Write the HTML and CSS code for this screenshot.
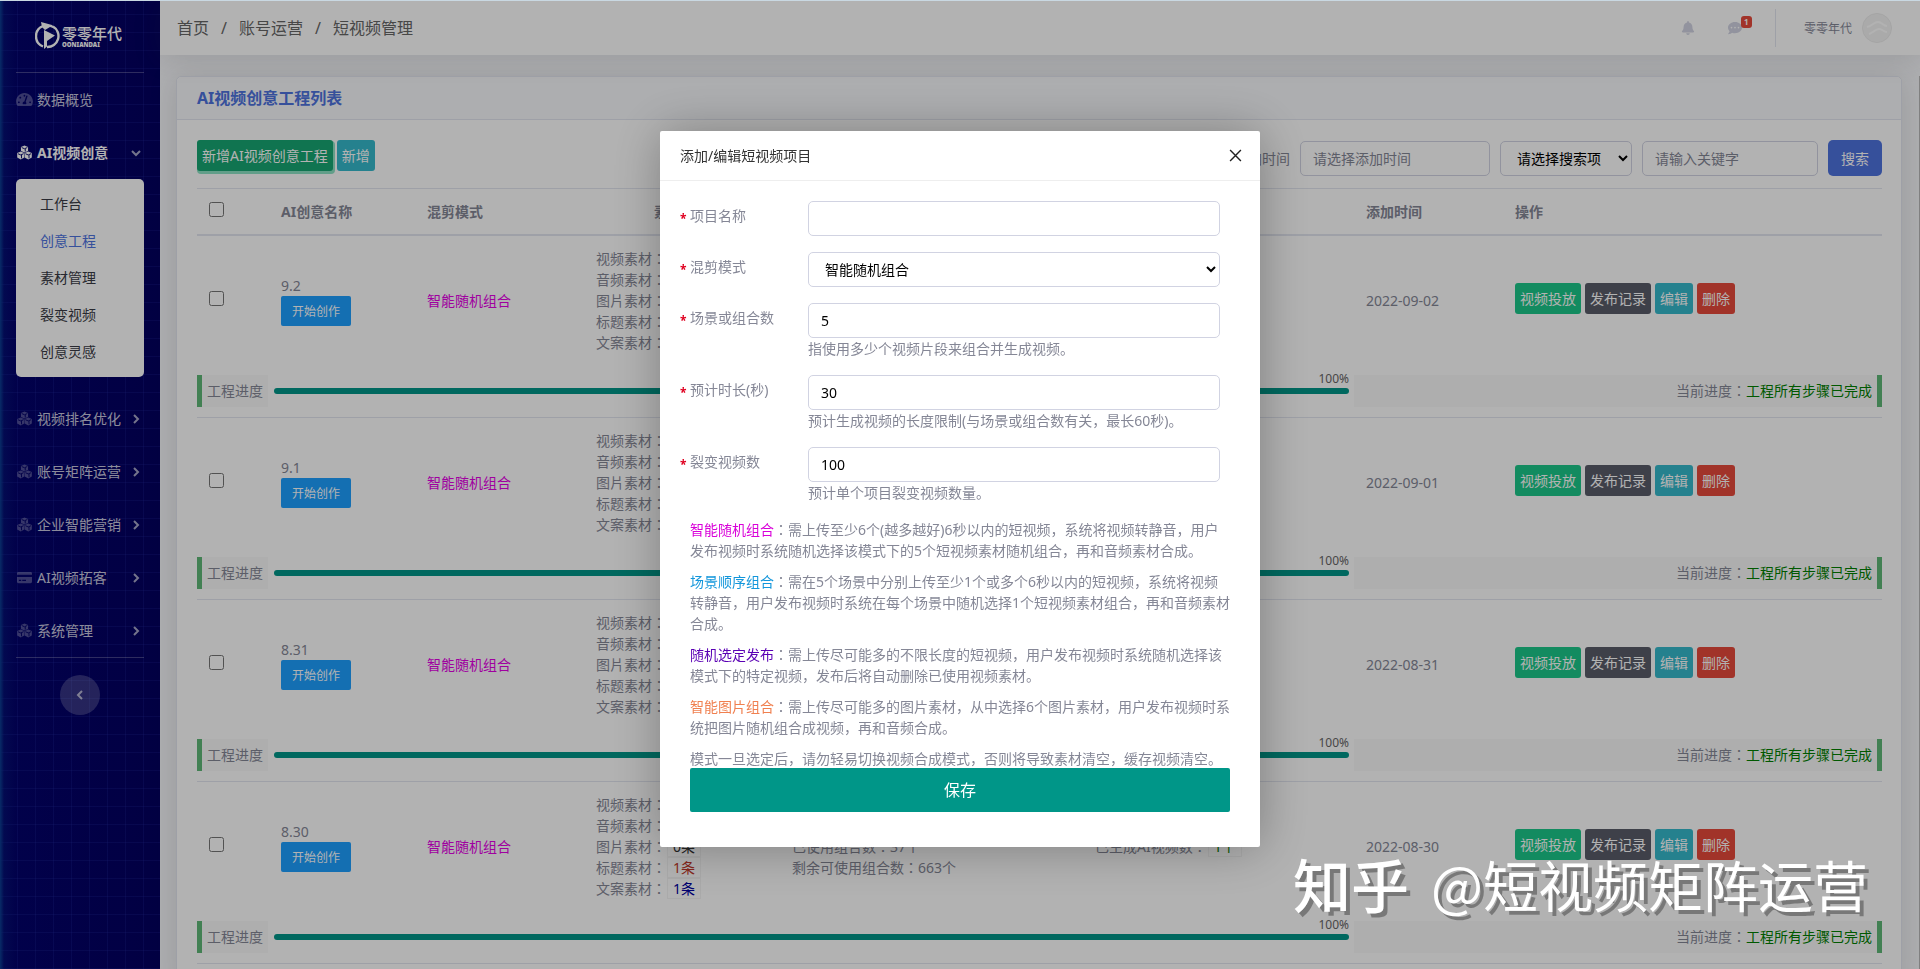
FILE: index.html
```html
<!DOCTYPE html>
<html lang="zh-CN">
<head>
<meta charset="utf-8">
<title>短视频管理</title>
<link rel="stylesheet" href="styles.css">
</head>
<body>
<svg class="sprite" aria-hidden="true">
  <symbol id="cubes" viewBox="0 0 16 16">
    <path d="M8 .6l3.800 1.500v4.200L8 8 4.200 6.300V2.100z"/>
    <path d="M4 7l3.800 1.600v4.800L4 15.400.2 13.400V8.600z"/>
    <path d="M12 7l3.800 1.600v4.800L12 15.400l-3.800-2V8.600z"/>
    <path class="seam" d="M5 2.700L8 4l3-1.300M8.800 4v3M1 9.300l3 1.300 3-1.300M4.800 10.600v3.600M9 9.300l3 1.300 3-1.300M12.800 10.600v3.600"/>
  </symbol>
  <symbol id="right" viewBox="0 0 10 10"><path d="M3 1l4 4-4 4" fill="none" stroke="currentColor" stroke-width="2"/></symbol>
  <symbol id="down" viewBox="0 0 10 10"><path d="M1 3l4 4 4-4" fill="none" stroke="currentColor" stroke-width="2"/></symbol>
  <symbol id="left" viewBox="0 0 10 10"><path d="M7 1L3 5l4 4" fill="none" stroke="currentColor" stroke-width="2"/></symbol>
</svg>

<div class="app">
  <aside class="sidebar">
    <a class="brand" href="#">
      <svg class="brand-mark" viewBox="0 0 26 28" aria-hidden="true">
        <path d="M8 5A11 11 0 0 0 8 25.500M18 5.500A11 11 0 0 1 12 26" fill="none" stroke="#fff" stroke-width="2.400"/>
        <path d="M9 9v19l3-2.500V20l8-5.500z" fill="#fff"/>
        <path d="M6 1l11 3 4 4-6-2-5 3-3-3z" fill="#fff"/>
      </svg>
      <span class="brand-text"><span class="brand-name">零零年代</span><span class="brand-sub">OONIANDAI</span></span>
    </a>
    <hr class="line">
    <nav>
      <a class="nav-item" href="#"><svg class="nav-icon" viewBox="0 0 576 512"><path d="M288 32C128.940 32 0 160.940 0 320c0 52.800 14.250 102.260 39.060 144.800 5.610 9.620 16.300 15.200 27.440 15.200h443c11.140 0 21.830-5.580 27.440-15.200C561.750 422.260 576 372.800 576 320c0-159.060-128.940-288-288-288zm0 64c14.710 0 26.580 10.130 30.320 23.650-1.110 2.260-2.640 4.230-3.450 6.670l-9.220 27.670c-5.130 3.490-10.970 6.010-17.640 6.010-17.670 0-32-14.330-32-32S270.330 96 288 96zM96 384c-17.670 0-32-14.330-32-32s14.330-32 32-32 32 14.330 32 32-14.330 32-32 32zm48-160c-17.670 0-32-14.330-32-32s14.330-32 32-32 32 14.330 32 32-14.330 32-32 32zm246.770-72.410l-61.330 184C343.130 347.330 352 364.540 352 384c0 11.720-3.380 22.550-8.880 32H232.880c-5.500-9.450-8.880-20.280-8.880-32 0-33.940 26.500-61.430 59.900-63.590l61.340-184.010c4.170-12.560 17.730-19.450 30.360-15.170 12.570 4.190 19.350 17.790 15.170 30.360zM480 384c-17.670 0-32-14.330-32-32s14.330-32 32-32 32 14.330 32 32-14.330 32-32 32z"/></svg><span>数据概览</span></a>
      <a class="nav-item active" href="#"><svg class="nav-icon"><use href="#cubes"/></svg><span>AI视频创意</span><svg class="arrow"><use href="#down"/></svg></a>
      <div class="submenu">
        <a href="#">工作台</a>
        <a class="current" href="#">创意工程</a>
        <a href="#">素材管理</a>
        <a href="#">裂变视频</a>
        <a href="#">创意灵感</a>
      </div>
      <a class="nav-item" href="#"><svg class="nav-icon"><use href="#cubes"/></svg><span>视频排名优化</span><svg class="arrow"><use href="#right"/></svg></a>
      <a class="nav-item" href="#"><svg class="nav-icon"><use href="#cubes"/></svg><span>账号矩阵运营</span><svg class="arrow"><use href="#right"/></svg></a>
      <a class="nav-item" href="#"><svg class="nav-icon"><use href="#cubes"/></svg><span>企业智能营销</span><svg class="arrow"><use href="#right"/></svg></a>
      <a class="nav-item" href="#"><svg class="nav-icon" viewBox="0 0 16 16"><path d="M1.500 2h13A1.500 1.500 0 0 1 16 3.500V5H0V3.500A1.500 1.500 0 0 1 1.500 2zM0 7.500h16v5a1.500 1.500 0 0 1-1.500 1.500h-13A1.500 1.500 0 0 1 0 12.500zM2 10.500v1.300h2.500v-1.300zm3.600 0v1.300h4v-1.300z"/></svg><span>AI视频拓客</span><svg class="arrow"><use href="#right"/></svg></a>
      <a class="nav-item" href="#"><svg class="nav-icon"><use href="#cubes"/></svg><span>系统管理</span><svg class="arrow"><use href="#right"/></svg></a>
    </nav>
    <hr class="line">
    <button class="collapse" type="button" aria-label="收起"><svg class="arrow"><use href="#left"/></svg></button>
  </aside>

  <div class="page">
    <header class="topbar">
      <ol class="crumbs"><li><a href="#">首页</a></li><li><a href="#">账号运营</a></li><li>短视频管理</li></ol>
      <div class="tools">
        <a class="tool" href="#" aria-label="通知"><svg class="tool-icon" viewBox="0 0 448 512"><path d="M224 512c35.320 0 63.970-28.650 63.970-64H160.030c0 35.350 28.650 64 63.970 64zm215.390-149.710c-19.320-20.760-55.470-51.990-55.470-154.290 0-77.700-54.480-139.900-127.940-155.160V32c0-17.670-14.320-32-31.980-32s-31.980 14.330-31.980 32v20.840C118.560 68.100 64.080 130.300 64.080 208c0 102.300-36.150 133.530-55.470 154.290-6 6.450-8.660 14.160-8.610 21.710.11 16.400 12.980 32 32.100 32h383.800c19.120 0 32-15.600 32.100-32 .05-7.550-2.610-15.270-8.610-21.710z"/></svg></a>
        <a class="tool" href="#" aria-label="消息"><svg class="tool-icon" viewBox="0 0 512 512"><path fill-rule="evenodd" d="M256 32C114.600 32 0 125.100 0 240c0 49.600 21.400 95 57 130.700C44.500 421.100 2.700 466 2.200 466.500c-2.200 2.300-2.800 5.700-1.500 8.700S4.800 480 8 480c66.300 0 116-31.800 140.600-51.400 32.700 12.300 69 19.400 107.400 19.400 141.400 0 256-93.100 256-208S397.400 32 256 32zM128 208a32 32 0 1 0 0 64 32 32 0 0 0 0-64zm128 0a32 32 0 1 0 0 64 32 32 0 0 0 0-64zm128 0a32 32 0 1 0 0 64 32 32 0 0 0 0-64z"/></svg><span class="badge">1</span></a>
        <a class="user" href="#"><span>零零年代</span>
          <svg class="avatar" viewBox="0 0 30 30" aria-hidden="true"><circle cx="15" cy="15" r="14.500" fill="#f4f4f4" stroke="#ececec"/><path d="M5 14c5-1 7-5 11-5 4 0 5 4 9 4M7 21c4-1 6-5 10-5 4 0 4 3 8 3" fill="none" stroke="#fff" stroke-width="2"/></svg></a>
      </div>
    </header>

    <main class="content">
      <section class="card">
        <h1 class="card-title">AI视频创意工程列表</h1>
        <div class="card-body">
          <div class="toolbar">
            <button class="btn create" type="button">新增AI视频创意工程</button>
            <button class="btn info" type="button">新增</button>
            <form class="filter">
              <label for="added">添加时间</label>
              <input class="field date" id="added" placeholder="请选择添加时间">
              <select class="field kind" aria-label="搜索项"><option>请选择搜索项</option></select>
              <input class="field word" aria-label="关键字" placeholder="请输入关键字">
              <button class="search" type="button">搜索</button>
            </form>
          </div>

          <table class="list">
            <colgroup><col class="c-check"><col class="c-name"><col class="c-mode"><col class="c-media"><col class="c-combo"><col class="c-made"><col class="c-date"><col></colgroup>
            <thead>
              <tr><th><input type="checkbox" aria-label="全选"></th><th>AI创意名称</th><th>混剪模式</th><th class="center">素材数量</th><th></th><th></th><th>添加时间</th><th>操作</th></tr>
            </thead>
            <tbody>
              <tr>
                <td><input type="checkbox" aria-label="9.2"></td>
                <td><div>9.2</div><button class="start" type="button">开始创作</button></td>
                <td class="mode">智能随机组合</td>
                <td>视频素材：<br>音频素材：<br>图片素材：<br>标题素材：<br>文案素材：</td>
                <td></td><td></td>
                <td>2022-09-02</td>
                <td><div class="actions"><button class="btn ok" type="button">视频投放</button><button class="btn dark" type="button">发布记录</button><button class="btn info" type="button">编辑</button><button class="btn danger" type="button">删除</button></div></td>
              </tr>
              <tr class="steps"><td colspan="8"><div class="step">
                <span class="step-name">工程进度</span>
                <div class="bar"><span class="percent">100%</span></div>
                <span class="state">当前进度：<b>工程所有步骤已完成</b></span>
              </div></td></tr>
            </tbody>
            <tbody>
              <tr>
                <td><input type="checkbox" aria-label="9.1"></td>
                <td><div>9.1</div><button class="start" type="button">开始创作</button></td>
                <td class="mode">智能随机组合</td>
                <td>视频素材：<br>音频素材：<br>图片素材：<br>标题素材：<br>文案素材：</td>
                <td></td><td></td>
                <td>2022-09-01</td>
                <td><div class="actions"><button class="btn ok" type="button">视频投放</button><button class="btn dark" type="button">发布记录</button><button class="btn info" type="button">编辑</button><button class="btn danger" type="button">删除</button></div></td>
              </tr>
              <tr class="steps"><td colspan="8"><div class="step">
                <span class="step-name">工程进度</span>
                <div class="bar"><span class="percent">100%</span></div>
                <span class="state">当前进度：<b>工程所有步骤已完成</b></span>
              </div></td></tr>
            </tbody>
            <tbody>
              <tr>
                <td><input type="checkbox" aria-label="8.31"></td>
                <td><div>8.31</div><button class="start" type="button">开始创作</button></td>
                <td class="mode">智能随机组合</td>
                <td>视频素材：<br>音频素材：<br>图片素材：<br>标题素材：<br>文案素材：</td>
                <td></td><td></td>
                <td>2022-08-31</td>
                <td><div class="actions"><button class="btn ok" type="button">视频投放</button><button class="btn dark" type="button">发布记录</button><button class="btn info" type="button">编辑</button><button class="btn danger" type="button">删除</button></div></td>
              </tr>
              <tr class="steps"><td colspan="8"><div class="step">
                <span class="step-name">工程进度</span>
                <div class="bar"><span class="percent">100%</span></div>
                <span class="state">当前进度：<b>工程所有步骤已完成</b></span>
              </div></td></tr>
            </tbody>
            <tbody>
              <tr>
                <td><input type="checkbox" aria-label="8.30"></td>
                <td><div>8.30</div><button class="start" type="button">开始创作</button></td>
                <td class="mode">智能随机组合</td>
                <td>视频素材：<br>音频素材：<br>图片素材：<span class="count">0条</span><br>标题素材：<span class="count red">1条</span><br>文案素材：<span class="count navy">1条</span></td>
                <td><br>已使用组合数：37个<br>剩余可使用组合数：663个</td>
                <td>已生成AI视频数：<span class="count green">1个</span></td>
                <td>2022-08-30</td>
                <td><div class="actions"><button class="btn ok" type="button">视频投放</button><button class="btn dark" type="button">发布记录</button><button class="btn info" type="button">编辑</button><button class="btn danger" type="button">删除</button></div></td>
              </tr>
              <tr class="steps"><td colspan="8"><div class="step">
                <span class="step-name">工程进度</span>
                <div class="bar"><span class="percent">100%</span></div>
                <span class="state">当前进度：<b>工程所有步骤已完成</b></span>
              </div></td></tr>
            </tbody>
          </table>
        </div>
      </section>
    </main>
  </div>
</div>

<div class="overlay">
  <div class="modal" role="dialog" aria-labelledby="dialog-title">
    <div class="modal-head">
      <h2 id="dialog-title">添加/编辑短视频项目</h2>
      <button class="close" type="button" aria-label="关闭"><svg viewBox="0 0 12 12"><path d="M1 1l10 10M11 1L1 11" stroke="#222" stroke-width="1.300"/></svg></button>
    </div>
    <form class="modal-form">
      <div class="row"><label for="f-name">项目名称</label><div><input class="field" id="f-name"></div></div>
      <div class="row"><label for="f-mode">混剪模式</label><div><select class="field" id="f-mode"><option>智能随机组合</option></select></div></div>
      <div class="row"><label for="f-scene">场景或组合数</label><div><input class="field" id="f-scene" value="5"><p>指使用多少个视频片段来组合并生成视频。</p></div></div>
      <div class="row"><label for="f-time">预计时长(秒)</label><div><input class="field" id="f-time" value="30"><p>预计生成视频的长度限制(与场景或组合数有关，最长60秒)。</p></div></div>
      <div class="row"><label for="f-count">裂变视频数</label><div><input class="field" id="f-count" value="100"><p>预计单个项目裂变视频数量。</p></div></div>
      <div class="notes">
        <p><span class="magenta">智能随机组合</span><span class="colon">：</span>需上传至少6个(越多越好)6秒以内的短视频，系统将视频转静音，用户发布视频时系统随机选择该模式下的5个短视频素材随机组合，再和音频素材合成。</p>
        <p><span class="blue">场景顺序组合</span><span class="colon">：</span>需在5个场景中分别上传至少1个或多个6秒以内的短视频，系统将视频转静音，用户发布视频时系统在每个场景中随机选择1个短视频素材组合，再和音频素材合成。</p>
        <p><span class="indigo">随机选定发布</span><span class="colon">：</span>需上传尽可能多的不限长度的短视频，用户发布视频时系统随机选择该模式下的特定视频，发布后将自动删除已使用视频素材。</p>
        <p><span class="coral">智能图片组合</span><span class="colon">：</span>需上传尽可能多的图片素材，从中选择6个图片素材，用户发布视频时系统把图片随机组合成视频，再和音频合成。</p>
        <p>模式一旦选定后，请勿轻易切换视频合成模式，否则将导致素材清空，缓存视频清空。</p>
      </div>
      <button class="save" type="button">保存</button>
    </form>
  </div>
</div>
<div class="watermark"><b>知乎</b><span>@短视频矩阵运营</span></div>
</body>
</html>
```

FILE: styles.css
```css
* { box-sizing: border-box; }
body {
  margin: 0;
  overflow: hidden;
  font: 14px/21px "Noto Sans", "Noto Sans CJK SC", sans-serif;
  color: #858796;
}
a { color: inherit; text-decoration: none; }
button, input, select { font: inherit; margin: 0; }
button { border: 0; cursor: pointer; white-space: nowrap; }
p, h1, h2, ol { margin: 0; padding: 0; }
.sprite { position: absolute; width: 0; height: 0; }

/* colons centred in their cell */
.list td, .colon {
  font-family: "Noto Sans", "Noto Sans CJK TC", sans-serif;
  font-feature-settings: "locl" 0;
}

.app {
  display: flex;
  height: 100vh;
  overflow: hidden;
  border-top: 1px solid #c9d8e2;
  background: #f8f9fc;
}

/* sidebar */
.sidebar {
  flex: 0 0 160px;
  padding: 0 16px;
  background:
    linear-gradient(90deg, #0c3f94, rgba(10, 50, 140, .25) 4px, transparent 16px),
    linear-gradient(90deg, transparent 17px, rgba(70, 90, 220, .13) 17px) 0 0 / 18px 18px,
    linear-gradient(transparent 17px, rgba(70, 90, 220, .13) 17px) 0 -4px / 18px 18px,
    linear-gradient(90deg, #02026c, #030060);
}
.brand { display: flex; gap: 1px; height: 71px; padding: 20px 0 0 19px; color: #fff; }
.brand-mark { width: 26px; height: 28px; }
.brand-text { display: flex; flex-direction: column; padding-top: 3px; }
.brand-name { font-size: 15px; line-height: 18px; font-weight: 500; }
.brand-sub { font-size: 6px; line-height: 6px; font-weight: 900; }
.line { margin: 0; border: 0; border-top: 1px solid rgba(255, 255, 255, .25); }
.nav-item { display: flex; align-items: center; height: 53px; color: rgba(255, 255, 255, .8); }
.nav-item span { flex: 1; padding-left: 4px; white-space: nowrap; }
.nav-icon { width: 17px; height: 15px; fill: rgba(255, 255, 255, .3); }
.seam { fill: none; stroke: #020268; stroke-width: 1; }
.arrow { width: 10px; height: 10px; margin-right: 3px; color: rgba(255, 255, 255, .65); }
.nav-item.active { color: #fff; font-weight: 700; }
.active .nav-icon { fill: #fff; }
.submenu { margin-bottom: 15px; padding: 7px 0 6px; border-radius: 5px; background: #fff; }
.submenu a { display: block; padding: 7px 24px 9px; color: #3a3b45; }
.submenu .current { color: #4e73df; }
.collapse {
  display: flex;
  align-items: center;
  justify-content: center;
  width: 40px;
  height: 40px;
  margin: 17px auto;
  padding: 0;
  border-radius: 50%;
  background: rgba(255, 255, 255, .2);
}
.collapse .arrow { margin: 0; }

/* top bar */
.page { flex: 1; min-width: 0; }
.topbar {
  position: relative;
  display: flex;
  align-items: center;
  justify-content: space-between;
  height: 54px;
  padding: 0 28px 0 17px;
  background: #fff;
  box-shadow: 0 2px 28px rgba(58, 59, 69, .15);
}
.crumbs { display: flex; list-style: none; font-size: 16px; color: #666; }
.crumbs li + li::before { content: "/"; padding: 0 12px; }
.tools { display: flex; align-items: center; }
.tool { position: relative; display: flex; width: 47px; justify-content: center; }
.tool-icon { width: 14px; height: 14px; fill: #d1d3e2; }
.badge {
  position: absolute;
  left: 29px;
  top: -5px;
  padding: 0 3px;
  border-radius: 3px;
  background: #e74a3b;
  color: #fff;
  font-size: 8px;
  line-height: 12px;
  font-weight: 700;
}
.user {
  display: flex;
  align-items: center;
  gap: 10px;
  height: 38px;
  margin-left: 16px;
  padding-left: 28px;
  border-left: 1px solid #e3e6f0;
  font-size: 12px;
}
.avatar { width: 30px; height: 30px; }

/* list card */
.content { margin-top: 21px; padding: 0 17px 0 16px; border-right: 1px solid #bbb; }
.card {
  border: 1px solid #e3e6f0;
  border-radius: 5px;
  background: #fff;
  box-shadow: 0 2px 28px rgba(58, 59, 69, .15);
}
.card-title {
  padding: 9px 20px;
  border-bottom: 1px solid #e3e6f0;
  border-radius: 5px 5px 0 0;
  background: #f8f9fc;
  color: #4e73df;
  font-size: 16px;
  line-height: 24px;
}
.card-body { padding: 20px 19px 20px 20px; }
.toolbar { display: flex; align-items: flex-start; gap: 4px; margin-bottom: 12px; }
.btn { padding: 5px; border-radius: 3px; color: #fff; }
.create { background: #17a673; box-shadow: 1px 2px 0 1px rgba(28, 200, 138, .5); }
.ok { background: #1cc88a; }
.info { background: #36b9cc; }
.dark { background: #5a5c69; }
.danger { background: #e74a3b; }
.filter { display: flex; gap: 10px; align-items: center; margin-left: auto; }
.field {
  width: 100%;
  height: 35px;
  padding: 6px 12px;
  border: 1px solid #d1d3e2;
  border-radius: 5px;
  background: #fff;
  color: #000;
}
.field::placeholder { color: #858796; }
.date { width: 190px; }
.kind { width: 132px; }
.word { width: 176px; }
.search { height: 36px; padding: 0 13px; border-radius: 5px; background: #4e73df; color: #fff; }

.list { width: 100%; table-layout: fixed; border-spacing: 0; }
.c-check { width: 72px; }
.c-name { width: 146px; }
.c-mode { width: 169px; }
.c-media { width: 196px; }
.c-combo { width: 303px; }
.c-made { width: 271px; }
.c-date { width: 149px; }
th, td { padding: 12px; text-align: left; vertical-align: middle; }
th { border-top: 1px solid #e3e6f0; border-bottom: 2px solid #e3e6f0; font-weight: 700; }
th.center { text-align: center; }
input[type="checkbox"] { display: block; width: 15px; height: 15px; margin-bottom: 4px; }
.mode { color: #e600e6; }
.start {
  display: block;
  padding: 1px 11px 0;
  border-radius: 2px;
  background: #1e9fff;
  color: #fff;
  font-size: 12px;
  line-height: 29px;
}
.actions { display: flex; gap: 4px; margin-bottom: 4px; }
.count { margin-left: 1px; padding: 0 5px; border: 1px solid #f4f4f4; color: #333; }
.red { color: #c0392b; }
.navy { color: #0000a0; }
.green { color: green; }
.steps td { padding: 10px 0; border-bottom: 1px solid #e3e6f0; }
.step { display: flex; align-items: center; }
.step-name { padding: 5px 5px 6px; border-left: 5px solid #5fb878; background: #fafafa; }
.bar {
  position: relative;
  flex: 1;
  height: 6px;
  margin: 0 5px 0 6px;
  border-radius: 3px;
  background: #009688;
}
.percent { position: absolute; right: 0; bottom: 6px; font-size: 12px; line-height: 18px; color: #666; }
.state {
  flex: 0 0 528px;
  padding: 5px 5px 6px;
  border-right: 5px solid #5fb878;
  background: #fafafa;
  text-align: right;
}
.state b { color: green; font-weight: 400; }

/* dialog */
.overlay {
  position: fixed;
  inset: 1px 0 0;
  display: flex;
  align-items: flex-start;
  justify-content: center;
  padding-top: 130px;
  background: rgba(0, 0, 0, .3);
}
.modal { width: 600px; border-radius: 2px; background: #fff; box-shadow: 1px 1px 50px rgba(0, 0, 0, .3); }
.modal-head {
  display: flex;
  align-items: center;
  justify-content: space-between;
  height: 50px;
  padding: 0 18px 0 20px;
  border-bottom: 1px solid #eee;
}
.modal-head h2 { font-size: 14px; font-weight: 400; color: #333; }
.close { display: flex; padding: 0; background: none; }
.close svg { width: 13px; height: 13px; }
.modal-form { display: flex; flex-direction: column; gap: 16px; padding: 20px 30px 35px 20px; }
.row { display: grid; grid-template-columns: 128px 1fr; padding-right: 10px; }
.row label { display: flex; padding-top: 4px; }
.row label::before { content: "*"; width: 10px; padding-top: 3px; color: #e00020; font-size: 12px; font-weight: 700; }
.row .field { display: block; }
.notes { display: flex; flex-direction: column; gap: 10px; padding-left: 10px; }
.magenta { color: #d900d9; }
.blue { color: #1296db; }
.indigo { color: #5a00b4; }
.coral { color: #f08050; }
.save {
  margin: -17px 0 0 10px;
  padding: 0;
  border-radius: 2px;
  background: #009688;
  color: #fff;
  font-size: 16px;
  line-height: 44px;
}

.watermark {
  position: fixed;
  right: 52px;
  bottom: 46px;
  display: flex;
  gap: 22px;
  color: #fff;
  font: 55px/80px "Noto Sans CJK SC", sans-serif;
  text-shadow: 4px 4px 0 rgba(0, 0, 0, .32);
  white-space: nowrap;
}
.watermark b { font-size: 58px; font-weight: 500; }
```
